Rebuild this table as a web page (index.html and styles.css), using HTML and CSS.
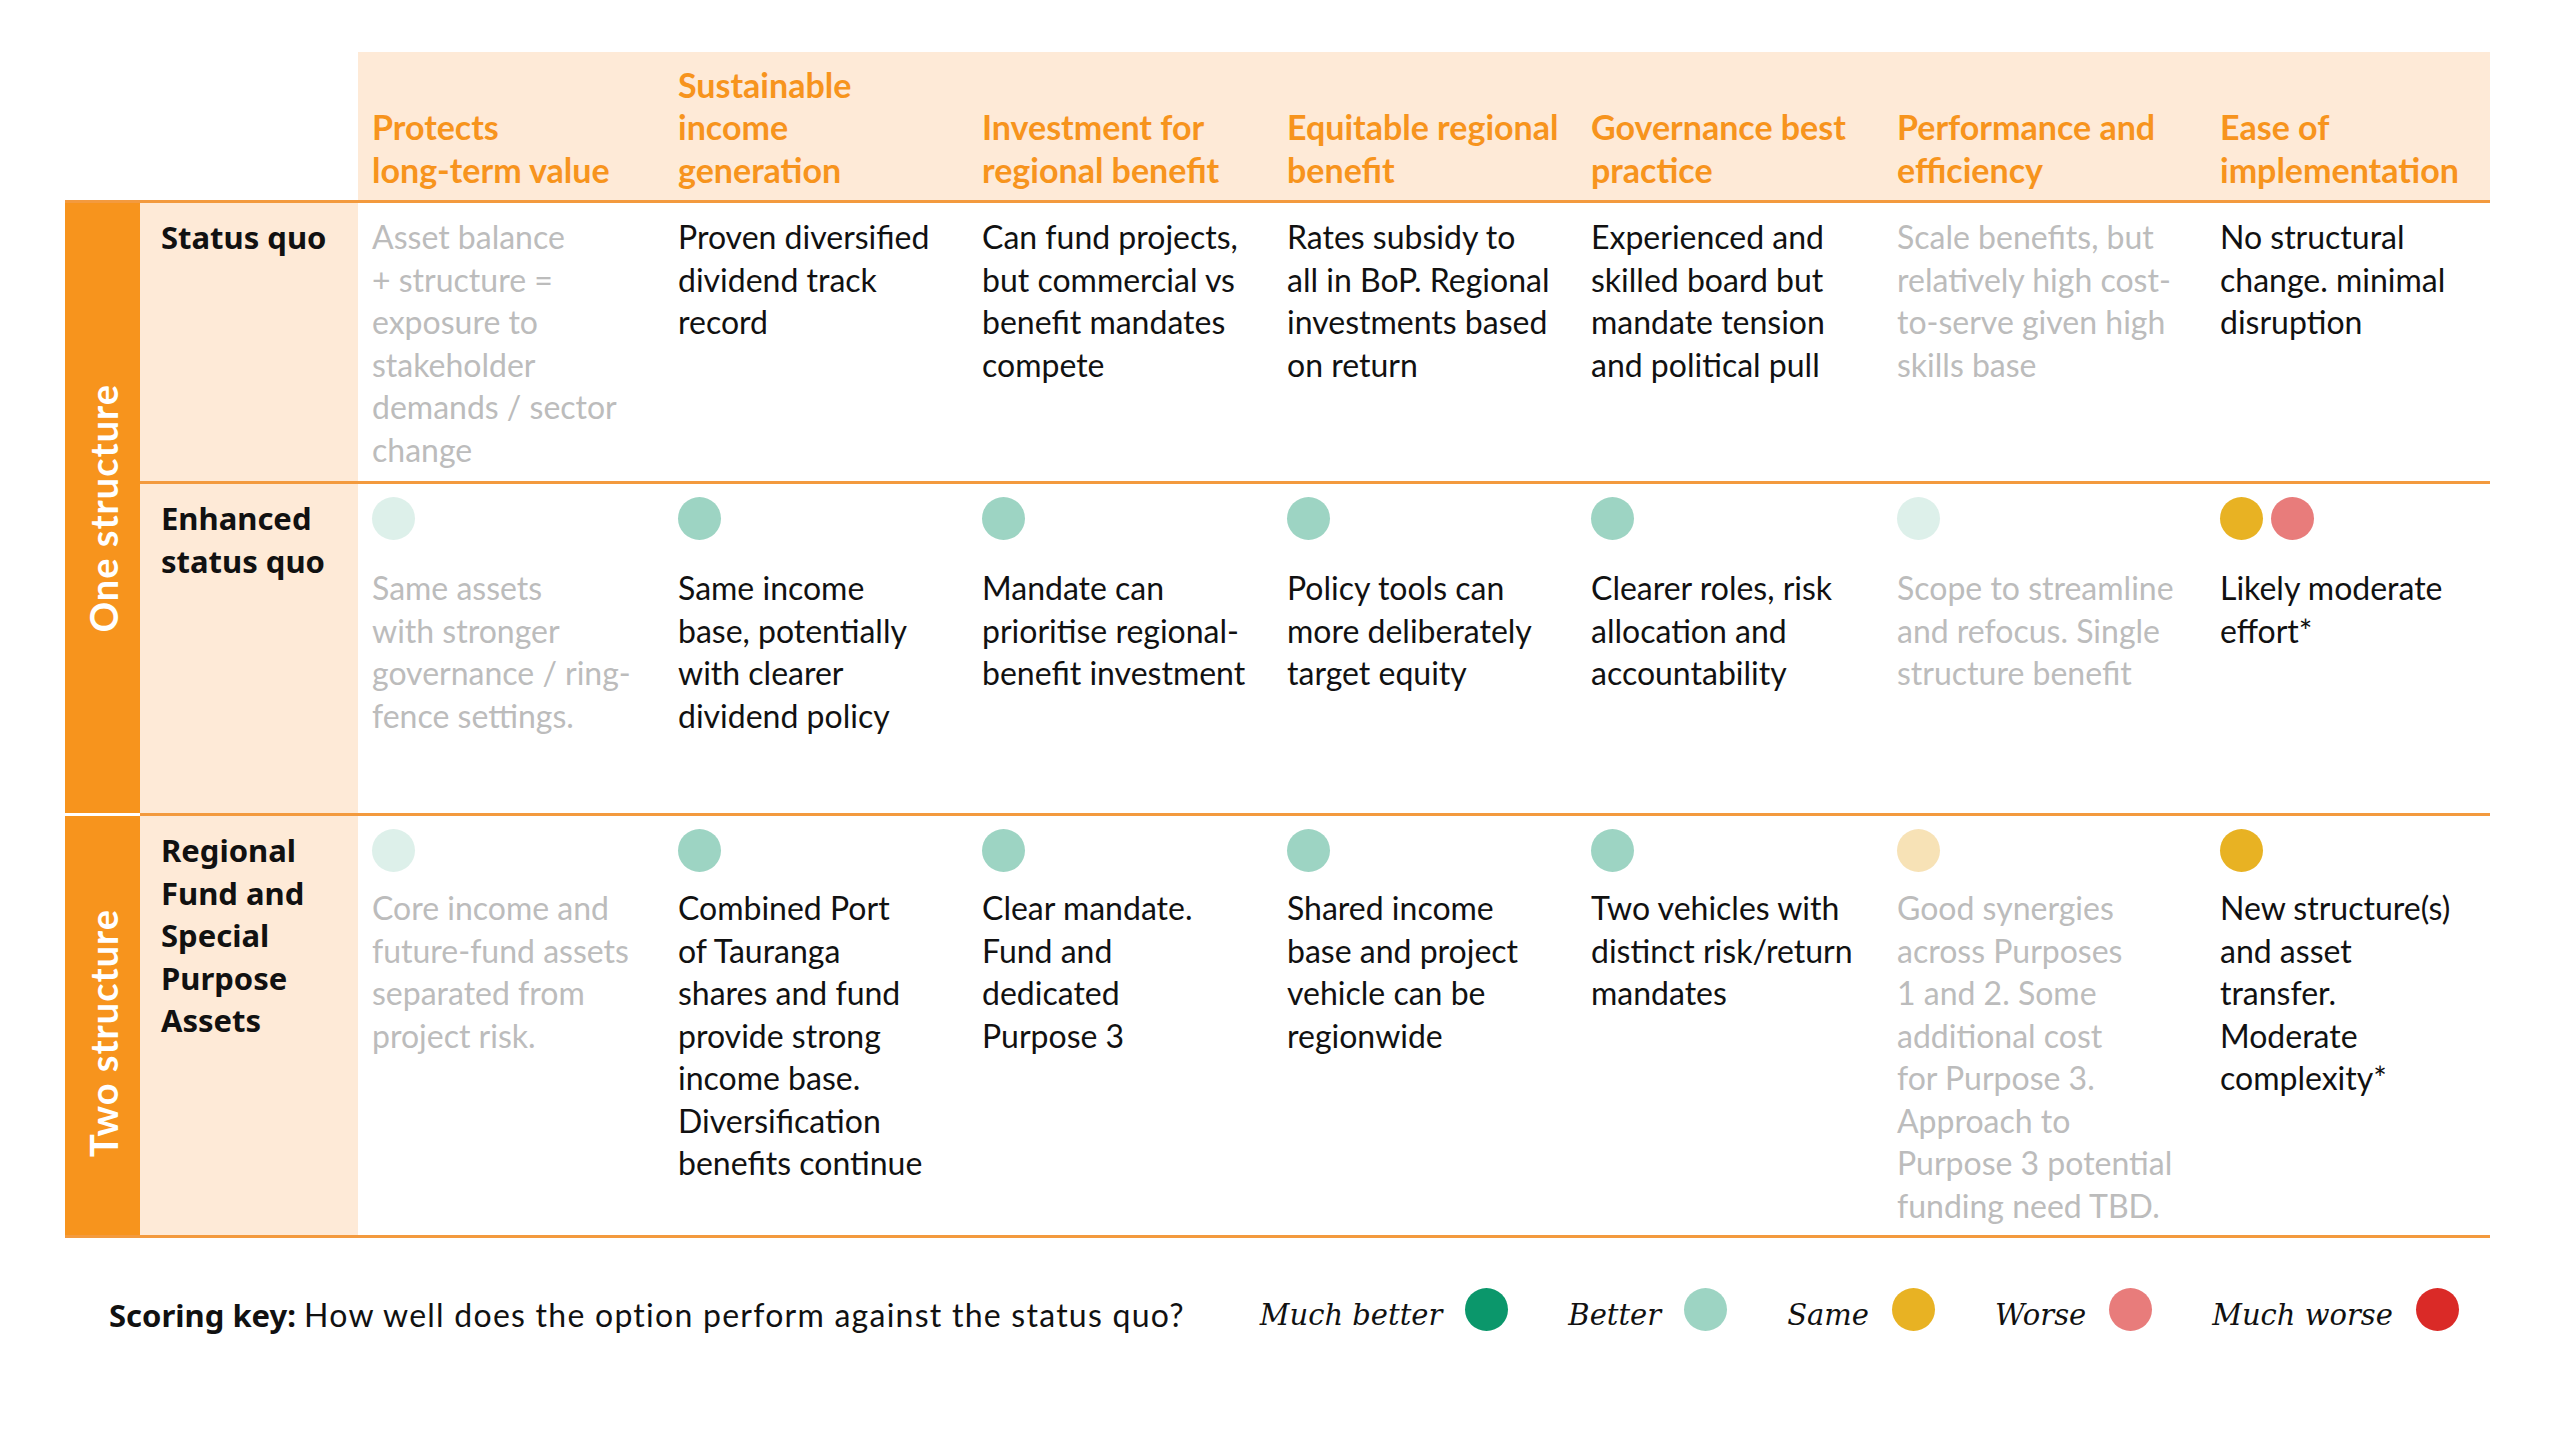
FILE: index.html
```html
<!DOCTYPE html>
<html lang="en">
<head>
<meta charset="utf-8">
<title>Options assessment</title>
<link rel="stylesheet" href="styles.css">
</head>
<body>
<div class="page">
  <div class="matrix">
    <div class="corner"></div>
    <div class="hd"><span>Protects<br>long-term value</span></div>
    <div class="hd"><span>Sustainable<br>income<br>generation</span></div>
    <div class="hd"><span>Investment for<br>regional benefit</span></div>
    <div class="hd"><span>Equitable regional<br>benefit</span></div>
    <div class="hd"><span>Governance best<br>practice</span></div>
    <div class="hd"><span>Performance and<br>efficiency</span></div>
    <div class="hd"><span>Ease of<br>implementation</span></div>

    <div class="group g1"><span>One structure</span></div>
    <div class="group g2"><span>Two structure</span></div>

    <div class="label">Status quo</div>
    <div class="cell r1"><p class="muted">Asset balance<br>+ structure =<br>exposure to<br>stakeholder<br>demands / sector<br>change</p></div>
    <div class="cell r1"><p>Proven diversified<br>dividend track<br>record</p></div>
    <div class="cell r1"><p>Can fund projects,<br>but commercial vs<br>benefit mandates<br>compete</p></div>
    <div class="cell r1"><p>Rates subsidy to<br>all in BoP. Regional<br>investments based<br>on return</p></div>
    <div class="cell r1"><p>Experienced and<br>skilled board but<br>mandate tension<br>and political pull</p></div>
    <div class="cell r1"><p class="muted">Scale benefits, but<br>relatively high cost-<br>to-serve given high<br>skills base</p></div>
    <div class="cell r1"><p>No structural<br>change. minimal<br>disruption</p></div>

    <div class="label">Enhanced<br>status quo</div>
    <div class="cell r2"><div class="dots"><i class="dot better-f"></i></div><p class="muted">Same assets<br>with stronger<br>governance / ring-<br>fence settings.</p></div>
    <div class="cell r2"><div class="dots"><i class="dot better"></i></div><p>Same income<br>base, potentially<br>with clearer<br>dividend policy</p></div>
    <div class="cell r2"><div class="dots"><i class="dot better"></i></div><p>Mandate can<br>prioritise regional-<br>benefit investment</p></div>
    <div class="cell r2"><div class="dots"><i class="dot better"></i></div><p>Policy tools can<br>more deliberately<br>target equity</p></div>
    <div class="cell r2"><div class="dots"><i class="dot better"></i></div><p>Clearer roles, risk<br>allocation and<br>accountability</p></div>
    <div class="cell r2"><div class="dots"><i class="dot better-f"></i></div><p class="muted">Scope to streamline<br>and refocus. Single<br>structure benefit</p></div>
    <div class="cell r2"><div class="dots"><i class="dot same"></i><i class="dot worse"></i></div><p>Likely moderate<br>effort*</p></div>

    <div class="label">Regional<br>Fund and<br>Special<br>Purpose<br>Assets</div>
    <div class="cell r3"><div class="dots"><i class="dot better-f"></i></div><p class="muted">Core income and<br>future-fund assets<br>separated from<br>project risk.</p></div>
    <div class="cell r3"><div class="dots"><i class="dot better"></i></div><p>Combined Port<br>of Tauranga<br>shares and fund<br>provide strong<br>income base.<br>Diversification<br>benefits continue</p></div>
    <div class="cell r3"><div class="dots"><i class="dot better"></i></div><p>Clear mandate.<br>Fund and<br>dedicated<br>Purpose 3</p></div>
    <div class="cell r3"><div class="dots"><i class="dot better"></i></div><p>Shared income<br>base and project<br>vehicle can be<br>regionwide</p></div>
    <div class="cell r3"><div class="dots"><i class="dot better"></i></div><p>Two vehicles with<br>distinct risk/return<br>mandates</p></div>
    <div class="cell r3"><div class="dots"><i class="dot same-f"></i></div><p class="muted">Good synergies<br>across Purposes<br>1 and 2. Some<br>additional cost<br>for Purpose 3.<br>Approach to<br>Purpose 3 potential<br>funding need TBD.</p></div>
    <div class="cell r3"><div class="dots"><i class="dot same"></i></div><p>New structure(s)<br>and asset<br>transfer.<br>Moderate<br>complexity*</p></div>
  </div>

  <div class="key">
    <p class="key-q"><b>Scoring key:</b> <span class="key-text">How well does the option perform against the status quo?</span></p>
    <ul class="key-items">
      <li class="key-item"><em>Much better</em><i class="dot much-better"></i></li>
      <li class="key-item"><em>Better</em><i class="dot better"></i></li>
      <li class="key-item"><em>Same</em><i class="dot same"></i></li>
      <li class="key-item"><em>Worse</em><i class="dot worse"></i></li>
      <li class="key-item"><em>Much worse</em><i class="dot much-worse"></i></li>
    </ul>
  </div>
</div>
</body>
</html>
```

FILE: styles.css
```css
* { box-sizing: border-box; margin: 0; padding: 0; }
html, body { background: #ffffff; }
body {
  font-family: Lato, "Liberation Sans", sans-serif;
  color: #1b1b1b;
}
.page {
  width: 2560px;
  height: 1432px;
  overflow: hidden;
  padding: 52px 0 0 65px;
}
.matrix {
  display: grid;
  grid-template-columns: 75px 218px 306px 304px 305px 304px 306px 323px 284px;
  grid-template-rows: 151px 281px 332px 422px;
  width: max-content;
}
.corner {
  grid-column: 1 / span 2;
  grid-row: 1;
  border-bottom: 3px solid #f39a3e;
}
.hd {
  background: #feead7;
  border-bottom: 3px solid #f39a3e;
  padding: 0 0 9px 14px;
  display: flex;
  align-items: flex-end;
  font-weight: 700;
  font-size: 34px;
  line-height: 42.5px;
  color: #f7941d;
  white-space: nowrap;
}
.group {
  grid-column: 1;
  background: #f7941d;
  display: flex;
  align-items: center;
  justify-content: center;
}
.group.g1 { grid-row: 2 / span 2; border-bottom: 3px solid #ffffff; }
.group.g2 { grid-row: 4; border-bottom: 3px solid #f39a3e; padding-top: 16px; }
.group span {
  writing-mode: vertical-rl;
  transform: rotate(180deg);
  color: #ffffff;
  font-weight: 700;
  font-size: 38px;
  letter-spacing: 1px;
  white-space: nowrap;
}
.label {
  grid-column: 2;
  background: #feead7;
  border-bottom: 3px solid #f39a3e;
  padding: 13px 0 0 21px;
  font-family: "Noto Sans", "Open Sans", sans-serif;
  font-weight: 700;
  font-size: 31px;
  line-height: 42.5px;
  color: #111111;
}
.cell {
  border-bottom: 3px solid #f39a3e;
  padding: 13px 0 0 14px;
  font-weight: 400;
  font-size: 32px;
  line-height: 42.5px;
  white-space: nowrap;
  color: #111111;
}
.muted { color: #bcbcbc; }
.dots { display: flex; gap: 8px; height: 43px; }
.r2 .dots { margin-bottom: 27px; }
.r3 .dots { margin-bottom: 15px; }
.dot {
  display: block;
  width: 43px;
  height: 43px;
  border-radius: 50%;
  flex: none;
}
.much-better { background: #0b976b; }
.better { background: #9dd4c3; }
.better-f { background: #ddf0ea; }
.same { background: #e8b223; }
.same-f { background: #f7e2b6; }
.worse { background: #e87c7b; }
.much-worse { background: #da2a27; }

.key {
  display: flex;
  align-items: flex-start;
  margin: 56px 0 0 44px;
  font-size: 32px;
  line-height: 42.5px;
  white-space: nowrap;
  color: #111111;
}
.key-q { font-weight: 400; }
.key-text { letter-spacing: 1.25px; }
.key-q b {
  font-family: "Noto Sans", "Open Sans", sans-serif;
  font-weight: 700;
  font-size: 31px;
}
.key-items {
  list-style: none;
  display: flex;
  margin-left: 75px;
}
.key-item {
  display: flex;
  align-items: flex-start;
  gap: 23px;
  margin-right: 60px;
}
.key-item em {
  font-family: "DejaVu Serif", "Liberation Serif", serif;
  font-style: italic;
  font-size: 29px;
}
.key-item .dot { margin-top: -6px; }
```
